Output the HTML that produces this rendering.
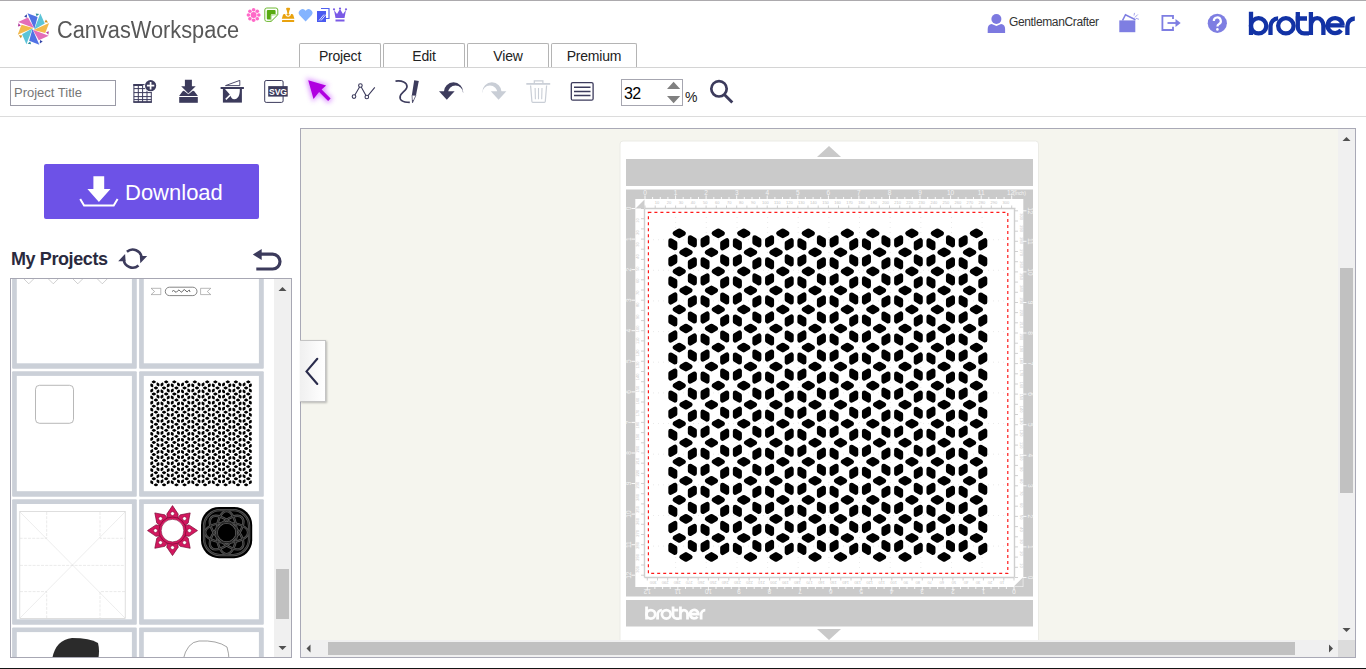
<!DOCTYPE html><html><head><meta charset="utf-8"><style>html,body{margin:0;padding:0}body{width:1366px;height:669px;position:relative;overflow:hidden;background:#fff;font-family:"Liberation Sans",sans-serif}</style></head><body><div style="position:absolute;left:0px;top:0px;width:1366px;height:1px;background:#acaaad"></div>
<svg style="position:absolute;left:0;top:0" width="60" height="50"><polygon points="34.38,28.72 27.49,13.17 37.59,17.02" fill="#5072e4"/><polygon points="34.23,29.46 40.34,13.60 44.76,23.46" fill="#5cc4d8"/><polygon points="33.58,29.88 49.13,22.99 45.28,33.09" fill="#f2b94c"/><polygon points="32.84,29.73 48.70,35.84 38.84,40.26" fill="#e36db9"/><polygon points="32.42,29.08 39.31,44.63 29.21,40.78" fill="#5072e4"/><polygon points="32.57,28.34 26.46,44.20 22.04,34.34" fill="#5cc4d8"/><polygon points="33.22,27.92 17.67,34.81 21.52,24.71" fill="#f2b94c"/><polygon points="33.96,28.07 18.10,21.96 27.96,17.54" fill="#e36db9"/><polygon points="26.99,14.24 24.10,16.38 26.78,17.71" fill="#3447a8"/><polygon points="39.24,14.00 35.68,13.47 36.63,16.31" fill="#2f8f9c"/><polygon points="48.06,22.49 45.92,19.60 44.59,22.28" fill="#d0901e"/><polygon points="48.30,34.74 48.83,31.18 45.99,32.13" fill="#b23a9c"/><polygon points="39.81,43.56 42.70,41.42 40.02,40.09" fill="#3447a8"/><polygon points="27.56,43.80 31.12,44.33 30.17,41.49" fill="#2f8f9c"/><polygon points="18.74,35.31 20.88,38.20 22.21,35.52" fill="#d0901e"/><polygon points="18.50,23.06 17.97,26.62 20.81,25.67" fill="#b23a9c"/></svg>
<div style="position:absolute;left:57px;top:15px;font-size:23.5px;color:#585858;line-height:30px;white-space:nowrap;transform:scaleX(0.926);transform-origin:0 0">CanvasWorkspace</div>
<svg style="position:absolute;left:244px;top:6px" width="106" height="18" viewBox="244 6 106 18">
<g fill="#ff69c8">
<circle cx="253.6" cy="15" r="3"/>
<circle cx="253.6" cy="9.8" r="1.8"/><circle cx="253.6" cy="20.2" r="1.8"/>
<circle cx="248.4" cy="15" r="1.8"/><circle cx="258.8" cy="15" r="1.8"/>
<circle cx="249.9" cy="11.3" r="1.8"/><circle cx="257.3" cy="11.3" r="1.8"/>
<circle cx="249.9" cy="18.7" r="1.8"/><circle cx="257.3" cy="18.7" r="1.8"/>
</g>
<path d="M264.8,10 a2,2 0 0 1 2,-2 h9 a2,2 0 0 1 2,2 v4.8 l-6.6,6.6 h-4.4 a2,2 0 0 1 -2,-2z" fill="#fff" stroke="#6cb830" stroke-width="1"/>
<path d="M266.8,11 a1,1 0 0 1 1,-1 h6.8 a1,1 0 0 1 1,1 v3.2 h-3.6 a1.2,1.2 0 0 0 -1.2,1.2 v4 h-3 a1,1 0 0 1 -1,-1z" fill="#58aa10"/>
<path d="M271,21.2 L277.6,14.6 L272,15.2 Q271.3,15.3 271.2,16z" fill="#fff" stroke="#7cc043" stroke-width="0.6"/>
<rect x="286.1" y="7.8" width="4" height="2.2" rx="1" fill="#e9a20e"/>
<path d="M286.6,9.8 L289.6,9.8 L288.7,13.8 L287.5,13.8 Z" fill="#e9a20e"/>
<path d="M281.8,18.8 L283,14.8 Q283.4,14 284.4,14 H285.2 Q285.6,16.8 288.1,16.8 Q290.6,16.8 291,14 H291.8 Q292.8,14 293.2,14.8 L294.4,18.8 Z" fill="#e9a20e"/>
<ellipse cx="288.1" cy="14.6" rx="1.6" ry="1.1" fill="#e9a20e"/>
<rect x="282" y="20.1" width="12.2" height="1.8" rx="0.5" fill="#e9a20e"/>
<path d="M305.6,21.5 l-6,-6.2 a3.6,3.6 0 0 1 6,-4.6 a3.6,3.6 0 0 1 6,4.6z" fill="#84b4ff"/>
<path d="M321,8.5 h8 v10 h-3" fill="none" stroke="#5060f0" stroke-width="1.2"/>
<rect x="317" y="11" width="9" height="11" fill="#4a5af0"/>
<path d="M319,20.5 l5,-6 M321,20.5 l5,-6" stroke="#fff" stroke-width="0.8"/>
<path d="M334,10 l3,4 l3,-5 l3,5 l3,-4 l-1.5,8 h-9z" fill="#7a5ae6"/>
<circle cx="334" cy="9.3" r="1.1" fill="#7a5ae6"/><circle cx="340" cy="8.5" r="1.1" fill="#7a5ae6"/><circle cx="346" cy="9.3" r="1.1" fill="#7a5ae6"/>
<rect x="335.5" y="19.5" width="9" height="2" fill="#7a5ae6"/>
</svg>
<div style="position:absolute;left:299px;top:43px;width:80px;height:24px;border:1px solid #b4b4b4;border-bottom:none;border-radius:2px 2px 0 0;background:#fff;box-sizing:content-box;font-size:14px;letter-spacing:-0.2px;color:#222;text-align:center;line-height:24px">Project</div>
<div style="position:absolute;left:383px;top:43px;width:80px;height:24px;border:1px solid #b4b4b4;border-bottom:none;border-radius:2px 2px 0 0;background:#fff;box-sizing:content-box;font-size:14px;letter-spacing:-0.2px;color:#222;text-align:center;line-height:24px">Edit</div>
<div style="position:absolute;left:467px;top:43px;width:80px;height:24px;border:1px solid #b4b4b4;border-bottom:none;border-radius:2px 2px 0 0;background:#fff;box-sizing:content-box;font-size:14px;letter-spacing:-0.2px;color:#222;text-align:center;line-height:24px">View</div>
<div style="position:absolute;left:551px;top:43px;width:84px;height:24px;border:1px solid #b4b4b4;border-bottom:none;border-radius:2px 2px 0 0;background:#fff;box-sizing:content-box;font-size:14px;letter-spacing:-0.2px;color:#222;text-align:center;line-height:24px">Premium</div>
<div style="position:absolute;left:0px;top:67px;width:1366px;height:1px;background:#d4d4d4"></div>
<svg style="position:absolute;left:985px;top:11px" width="24" height="24" viewBox="985 11 24 24">
<circle cx="996.4" cy="19" r="5" fill="#7c79e0"/>
<path d="M987.7,33 v-4 q0,-4.5 4,-5 l4.7,2 l4.7,-2 q4,0.5 4,5 v4z" fill="#7c79e0"/>
</svg>
<div style="position:absolute;left:1009px;top:14px;font-size:12px;letter-spacing:-0.36px;color:#333;line-height:16px;white-space:nowrap">GentlemanCrafter</div>
<svg style="position:absolute;left:1115px;top:10px" width="30" height="26" viewBox="1115 10 30 26">
<rect x="1119.3" y="20.4" width="16" height="11.8" fill="#7e7ee2"/>
<path d="M1122.5,20.5 l3,-5.8 l10,5" fill="none" stroke="#7e7ee2" stroke-width="1.6"/>
<path d="M1134.8,17.5 l3,-3 M1136,18.3 l3,1 M1134,15.5 l0.5,-2.6" stroke="#8e8ee8" stroke-width="0.8"/>
</svg>
<svg style="position:absolute;left:1158px;top:12px" width="26" height="22" viewBox="1158 12 26 22">
<path d="M1173,19 v-3.2 h-10.6 v14.2 h10.6 v-3.2" fill="none" stroke="#7e7ee2" stroke-width="1.8"/>
<path d="M1167.5,23 h8.5" stroke="#7e7ee2" stroke-width="1.8"/>
<path d="M1175.5,19 l5.2,4 l-5.2,4z" fill="#7e7ee2"/>
</svg>
<svg style="position:absolute;left:1205px;top:11px" width="25" height="25" viewBox="1205 11 25 25">
<circle cx="1217.3" cy="23.3" r="9.6" fill="#7e7ee2"/>
<path d="M1213.8,21 a3.5,3.5 0 1 1 5.2,3 q-1.6,0.8 -1.6,2.6" fill="none" stroke="#fff" stroke-width="2.2"/>
<circle cx="1217.4" cy="29.4" r="1.3" fill="#fff"/>
</svg>
<svg style="position:absolute;left:1245px;top:8px" width="115" height="32" viewBox="1245 8 115 32">
<g fill="none" stroke="#1232a5" stroke-width="4.3">
<path d="M1251,11.8 V34.9 M1270.5,34.9 V26.3 A7.6,7.9 0 0 1 1278.1,18.4 M1297.8,12.1 V27 A6.4,6.4 0 0 0 1304.2,33.4 H1309 M1295.5,18.5 H1307 M1310.9,12.1 V34.9 M1310.9,34.9 V25.9 A6.25,7.7 0 0 1 1323.4,25.9 V34.9 M1342.6,25.3 A7.5,7.5 0 1 0 1341.1,30.1 M1327.5,25.3 H1344.6 M1347.4,34.9 V26.3 A7.4,7.9 0 0 1 1354.8,18.5"/>
<ellipse cx="1258.6" cy="25.8" rx="7.7" ry="7.6"/>
<ellipse cx="1285.9" cy="25.8" rx="7.75" ry="7.6"/>
</g>
</svg>
<div style="position:absolute;left:10px;top:80px;width:104px;height:24px;border:1px solid #9a9aa6;font-size:13px;color:#767676;line-height:24px;padding-left:3px;box-sizing:content-box;white-space:nowrap;overflow:hidden;width:101px">Project Title</div>
<svg style="position:absolute;left:130px;top:77px" width="30" height="30" viewBox="130 77 30 30">
<g fill="none" stroke="#3c3b5c" stroke-width="1">
<rect x="133.9" y="84.6" width="17.4" height="17.6"/>
<path d="M133.9,88.6 h17.4 M133.9,92.6 h17.4 M133.9,96.6 h17.4 M133.9,99.6 h17.4 M138.3,84.6 v17.6 M142.6,84.6 v17.6 M147,84.6 v17.6"/>
</g>
<rect x="133.4" y="84" width="9" height="2" fill="#3c3b5c"/>
<rect x="133.4" y="101.2" width="18.4" height="1.5" fill="#3c3b5c"/>
<circle cx="150.6" cy="85.7" r="6.3" fill="#fff"/>
<circle cx="150.6" cy="85.7" r="5.6" fill="#3c3b5c"/>
<path d="M150.6,82 v7.4 M146.9,85.7 h7.4" stroke="#fff" stroke-width="1.7"/>
</svg>
<svg style="position:absolute;left:176px;top:77px" width="26" height="30" viewBox="176 77 26 30">
<path d="M184.9,79.8 H191.9 V86.2 H195.7 L188.4,93.5 L181.2,86.2 H184.9 Z" fill="#3c3b5c"/>
<path d="M179.1,95.9 L182.6,91.2 Q183.2,90.5 184,90.7 L188.4,94.3 L192.8,90.7 Q193.7,90.5 194.3,91.2 L197.9,95.9 Z" fill="#3c3b5c"/>
<rect x="179.2" y="97" width="18.6" height="5.8" fill="#3c3b5c"/>
</svg>
<svg style="position:absolute;left:218px;top:77px" width="30" height="30" viewBox="218 77 30 30">
<path d="M225.5,85.6 l14.3,-5.2 v5.2z" fill="none" stroke="#3c3b5c" stroke-width="0.9"/>
<rect x="220.6" y="87" width="23.3" height="2" fill="#3c3b5c"/>
<rect x="222.9" y="88.9" width="19" height="13.7" fill="#3c3b5c"/>
<path d="M225,89 H239.8 C240,95 238,99.3 234.4,99.3 C232,99.3 230.8,97 230.3,95 Z" fill="#fff"/>
<path d="M225.8,99.4 L231,94.4" stroke="#fff" stroke-width="1.5"/>
</svg>
<svg style="position:absolute;left:262px;top:77px" width="30" height="30" viewBox="262 77 30 30">
<rect x="264.7" y="80.5" width="18.4" height="21.9" rx="1.5" fill="#fff" stroke="#3c3b5c" stroke-width="1"/>
<rect x="268.2" y="86.1" width="19.5" height="10.5" fill="#3c3b5c"/>
<text x="277.9" y="94.6" font-family="Liberation Sans" font-weight="bold" font-size="8.6" fill="#fff" text-anchor="middle" letter-spacing="-0.2">SVG</text>
</svg>
<svg style="position:absolute;left:298px;top:70px" width="44" height="42" viewBox="298 70 44 42">
<defs><filter id="glow" x="-60%" y="-60%" width="220%" height="220%"><feGaussianBlur stdDeviation="2.6"/></filter></defs>
<path d="M308.2,80.3 L326.1,85.6 L321.6,89.6 L330.6,98.6 L328.1,101.1 L319.1,92.1 L313.5,98.9 Z" fill="#d070ff" stroke="#d070ff" stroke-width="3" opacity="0.75" filter="url(#glow)"/>
<path d="M308.2,80.3 L326.1,85.6 L321.6,89.6 L330.6,98.6 L328.1,101.1 L319.1,92.1 L313.5,98.9 Z" fill="#b000e0"/>
</svg>
<svg style="position:absolute;left:348px;top:80px" width="32" height="24" viewBox="348 80 32 24">
<path d="M354,96.6 l6.4,-11.1 l6.4,11.5 l8,-9.6" fill="none" stroke="#3c3b5c" stroke-width="1.1"/>
<circle cx="354" cy="96.6" r="1.8" fill="#fff" stroke="#3c3b5c" stroke-width="1.1"/>
<circle cx="360.4" cy="85.5" r="1.8" fill="#fff" stroke="#3c3b5c" stroke-width="1.1"/>
<circle cx="366.8" cy="97" r="1.8" fill="#fff" stroke="#3c3b5c" stroke-width="1.1"/>
</svg>
<svg style="position:absolute;left:392px;top:77px" width="30" height="30" viewBox="392 77 30 30">
<path d="M395.5,81.1 C402,80.3 407,82.3 407,86.5 C407,90.3 401.2,92.5 400.2,96.2 C399.4,99.8 402,102.3 409.8,102.4" fill="none" stroke="#3c3b5c" stroke-width="1.7"/>
<path d="M414.2,80.3 L418.8,81 L416,95.2 L411.9,95 Z" fill="#3c3b5c"/>
<path d="M412,95.2 L415.9,95.4 L412.5,102.8 Z" fill="#fff" stroke="#3c3b5c" stroke-width="0.7" stroke-linejoin="round"/>
<path d="M412.2,100 L413.6,100 L412.5,102.8z" fill="#3c3b5c"/>
</svg>
<svg style="position:absolute;left:436px;top:78px" width="30" height="26" viewBox="436 78 30 26">
<path d="M443.8,92 A9.7,9.7 0 0 1 463.2,92 L463.1,93 A7.6,7.6 0 0 0 447.9,93 Z" fill="#3c3b5c"/>
<path d="M439,91.3 L454.6,91.3 L446.8,99.8 Z" fill="#3c3b5c"/>
</svg>
<svg style="position:absolute;left:479px;top:78px" width="30" height="26" viewBox="479 78 30 26">
<path d="M501.6,92 A9.7,9.7 0 0 0 482.2,92 L482.3,93 A7.6,7.6 0 0 1 497.5,93 Z" fill="#c9ced6"/>
<path d="M506.4,91.3 L490.8,91.3 L498.6,99.8 Z" fill="#c9ced6"/>
</svg>
<svg style="position:absolute;left:524px;top:77px" width="30" height="28" viewBox="524 77 30 28">
<g fill="none" stroke="#c9ced6">
<path d="M526.3,83.9 h23.9" stroke-width="1.7"/>
<path d="M534.3,83.2 v-2.4 h8.6 v2.4" stroke-width="1.2"/>
<path d="M530.6,85.5 l1.3,16 q0.1,0.8 0.9,0.8 h11.6 q0.8,0 0.9,-0.8 l1.3,-16" stroke-width="1.2"/>
<path d="M535.1,88 l0.3,11.2 M538.5,88 v11.2 M542,88 l-0.3,11.2" stroke-width="1.1"/>
</g>
</svg>
<svg style="position:absolute;left:568px;top:79px" width="28" height="24" viewBox="568 79 28 24">
<rect x="571.3" y="82.6" width="21.8" height="17.6" rx="1.5" fill="#fff" stroke="#3c3b5c" stroke-width="1.3"/>
<path d="M574,87.2 h16.5 M574,91.4 h16.5 M574,95.6 h16.5" stroke="#3c3b5c" stroke-width="1.5"/>
</svg>
<div style="position:absolute;left:621px;top:79px;width:60px;height:25px;border:1px solid #a6a6b0;box-sizing:content-box"></div>
<div style="position:absolute;left:624px;top:83px;font-size:16px;letter-spacing:-0.7px;color:#000;line-height:22px">32</div>
<svg style="position:absolute;left:664px;top:80px" width="20" height="26" viewBox="664 80 20 26">
<path d="M667,89 l6.6,-7.2 l6.6,7.2z M667,96 h13.2 l-6.6,7.2z" fill="#808080"/>
</svg>
<div style="position:absolute;left:685px;top:88.5px;font-size:14px;color:#222;line-height:16px">%</div>
<svg style="position:absolute;left:706px;top:76px" width="30" height="30" viewBox="706 76 30 30">
<circle cx="719" cy="88.8" r="7.7" fill="none" stroke="#3c3b5c" stroke-width="2.7"/>
<path d="M724.3,94.4 l8,8.1" stroke="#3c3b5c" stroke-width="2.9" stroke-linecap="butt"/>
</svg>
<div style="position:absolute;left:0px;top:116px;width:1366px;height:1px;background:#dcdcdc"></div>
<div style="position:absolute;left:44px;top:164px;width:215px;height:55px;background:#6d52e7;border-radius:2px"></div>
<svg style="position:absolute;left:76px;top:172px" width="46" height="38" viewBox="76 172 46 38">
<path d="M93.4,176.2 h10.8 v12.8 h6.3 l-11.6,12.9 l-11.5,-12.9 h6z" fill="#fff"/>
<path d="M80.2,199.1 l3.9,6.4 h29.6 l3.9,-6.4" fill="none" stroke="#fff" stroke-width="2"/>
</svg>
<div style="position:absolute;left:125px;top:177.5px;font-size:22px;color:#fff;line-height:30px;white-space:nowrap">Download</div>
<div style="position:absolute;left:11px;top:246.5px;font-size:18px;font-weight:bold;letter-spacing:-0.4px;color:#2a2a3e;line-height:24px;white-space:nowrap">My Projects</div>
<svg style="position:absolute;left:114px;top:244px" width="36" height="30" viewBox="114 244 36 30">
<path d="M126.91,251.71 A9,9 0 0 1 141.65,257.66 M138.49,265.49 A9,9 0 0 1 123.75,259.54" fill="none" stroke="#3c3b5c" stroke-width="2.6"/>
<path d="M139.8,256 L147.2,256 L140.3,263.3 Z M125.6,261.2 L118.2,261.2 L125.1,253.9 Z" fill="#3c3b5c"/>
</svg>
<svg style="position:absolute;left:250px;top:246px" width="34" height="28" viewBox="250 246 34 28">
<path d="M260.5,254.2 H272.6 A7.4,7.4 0 0 1 272.6,269 H256.3" fill="none" stroke="#3c3b5c" stroke-width="3.2"/>
<path d="M252.8,254.4 L261.7,249 L261.7,260 Z" fill="#3c3b5c"/>
</svg>
<svg style="position:absolute;left:10px;top:278px" width="283" height="380" viewBox="10 278 283 380"><rect x="10.5" y="278.5" width="281" height="379" fill="#fff"/><rect x="12.1" y="243.3" width="124.7" height="125.5" rx="1" fill="#cbd0d8"/><rect x="16.8" y="248.0" width="115.1" height="115.3" fill="#fff"/><rect x="139.1" y="243.3" width="124.7" height="125.5" rx="1" fill="#cbd0d8"/><rect x="143.79999999999998" y="248.0" width="115.1" height="115.3" fill="#fff"/><rect x="12.1" y="371.2" width="124.7" height="125.5" rx="1" fill="#cbd0d8"/><rect x="16.8" y="375.9" width="115.1" height="115.3" fill="#fff"/><rect x="139.1" y="371.2" width="124.7" height="125.5" rx="1" fill="#cbd0d8"/><rect x="143.79999999999998" y="375.9" width="115.1" height="115.3" fill="#fff"/><rect x="12.1" y="499.3" width="124.7" height="125.5" rx="1" fill="#cbd0d8"/><rect x="16.8" y="504.0" width="115.1" height="115.3" fill="#fff"/><rect x="139.1" y="499.3" width="124.7" height="125.5" rx="1" fill="#cbd0d8"/><rect x="143.79999999999998" y="504.0" width="115.1" height="115.3" fill="#fff"/><rect x="12.1" y="627.4" width="124.7" height="125.5" rx="1" fill="#cbd0d8"/><rect x="16.8" y="632.1" width="115.1" height="115.3" fill="#fff"/><rect x="139.1" y="627.4" width="124.7" height="125.5" rx="1" fill="#cbd0d8"/><rect x="143.79999999999998" y="632.1" width="115.1" height="115.3" fill="#fff"/><path d="M24.0,279 l4.8,4.8 l4.8,-4.8" fill="none" stroke="#b0b0b0" stroke-width="0.6"/><path d="M48.5,279 l4.8,4.8 l4.8,-4.8" fill="none" stroke="#b0b0b0" stroke-width="0.6"/><path d="M73.0,279 l4.8,4.8 l4.8,-4.8" fill="none" stroke="#b0b0b0" stroke-width="0.6"/><path d="M97.5,279 l4.8,4.8 l4.8,-4.8" fill="none" stroke="#b0b0b0" stroke-width="0.6"/><path d="M151.1,288.3 H160.8 V294.6 H151.1 L154.6,291.5 Z" fill="none" stroke="#8a8a8a" stroke-width="0.6"/><rect x="165.3" y="287.2" width="31.7" height="8.4" rx="4.2" fill="none" stroke="#666" stroke-width="0.8"/><path d="M172,291.5 q1.5,-2 3,0 q1,2 2.5,-0.5 q1.5,-2.5 3,0.5 q1,2 2.5,-1 q1.5,-2 3,0.5 q1,2 2.5,-0.5 q1,-1.5 1.5,1.5" fill="none" stroke="#555" stroke-width="0.9"/><path d="M210.8,288.3 H200.6 V294.6 H210.8 L207.3,291.5 Z" fill="none" stroke="#8a8a8a" stroke-width="0.6"/><rect x="35.5" y="385.3" width="38" height="38" rx="4" fill="none" stroke="#999" stroke-width="0.7"/><use href="#pat" transform="translate(-62.2,307.7) scale(0.318)"/><rect x="19.8" y="511.5" width="105.4" height="107" fill="none" stroke="#d0d0d0" stroke-width="0.7"/><path d="M20,512 L125,618 M125,512 L20,618" stroke="#dadada" stroke-width="0.5"/><path d="M46.7,512 V538.3 H20 M100,512 V538.3 H125 M20,565.4 H125 M20,591.6 H46.7 V618 M125,591.6 H100 V618" fill="none" stroke="#d6d6d6" stroke-width="0.5" stroke-dasharray="3,1.2"/><g fill="#d3175f" stroke="#7a0a35" stroke-width="0.7" stroke-linejoin="round"><polygon points="172.50,505.60 178.20,514.05 177.58,519.18 167.42,519.18 166.80,514.05"/><polygon points="190.18,512.92 188.23,522.93 184.17,526.12 176.98,518.93 180.17,514.87"/><polygon points="197.50,530.60 189.05,536.30 183.92,535.68 183.92,525.52 189.05,524.90"/><polygon points="190.18,548.28 180.17,546.33 176.98,542.27 184.17,535.08 188.23,538.27"/><polygon points="172.50,555.60 166.80,547.15 167.42,542.02 177.58,542.02 178.20,547.15"/><polygon points="154.82,548.28 156.77,538.27 160.83,535.08 168.02,542.27 164.83,546.33"/><polygon points="147.50,530.60 155.95,524.90 161.08,525.52 161.08,535.68 155.95,536.30"/><polygon points="154.82,512.92 164.83,514.87 168.02,518.93 160.83,526.12 156.77,522.93"/><circle cx="172.5" cy="530.6" r="13.6"/></g><circle cx="172.5" cy="530.6" r="11.3" fill="#fff" stroke="#7a0a35" stroke-width="0.6"/><circle cx="172.50" cy="513.60" r="1.9" fill="#fff" stroke="#7a0a35" stroke-width="0.5"/><circle cx="184.52" cy="518.58" r="1.9" fill="#fff" stroke="#7a0a35" stroke-width="0.5"/><circle cx="189.50" cy="530.60" r="1.9" fill="#fff" stroke="#7a0a35" stroke-width="0.5"/><circle cx="184.52" cy="542.62" r="1.9" fill="#fff" stroke="#7a0a35" stroke-width="0.5"/><circle cx="172.50" cy="547.60" r="1.9" fill="#fff" stroke="#7a0a35" stroke-width="0.5"/><circle cx="160.48" cy="542.62" r="1.9" fill="#fff" stroke="#7a0a35" stroke-width="0.5"/><circle cx="155.50" cy="530.60" r="1.9" fill="#fff" stroke="#7a0a35" stroke-width="0.5"/><circle cx="160.48" cy="518.58" r="1.9" fill="#fff" stroke="#7a0a35" stroke-width="0.5"/><rect x="201.0" y="507.0" width="51.2" height="51.2" rx="18" fill="#000"/><g fill="none" stroke="#5a5a5a" stroke-width="2.4"><ellipse cx="226.6" cy="532.6" rx="21.5" ry="10" transform="rotate(0 226.6 532.6)"/><ellipse cx="226.6" cy="532.6" rx="21.5" ry="10" transform="rotate(45 226.6 532.6)"/><ellipse cx="226.6" cy="532.6" rx="21.5" ry="10" transform="rotate(90 226.6 532.6)"/><ellipse cx="226.6" cy="532.6" rx="21.5" ry="10" transform="rotate(135 226.6 532.6)"/><circle cx="226.6" cy="532.6" r="10"/><rect x="204.1" y="510.1" width="45" height="45" rx="16"/></g><g fill="none" stroke="#1a1a1a" stroke-width="0.7"><ellipse cx="226.6" cy="532.6" rx="21.5" ry="10" transform="rotate(0 226.6 532.6)"/><ellipse cx="226.6" cy="532.6" rx="21.5" ry="10" transform="rotate(45 226.6 532.6)"/><ellipse cx="226.6" cy="532.6" rx="21.5" ry="10" transform="rotate(90 226.6 532.6)"/><ellipse cx="226.6" cy="532.6" rx="21.5" ry="10" transform="rotate(135 226.6 532.6)"/><circle cx="226.6" cy="532.6" r="10"/><rect x="204.1" y="510.1" width="45" height="45" rx="16"/></g><circle cx="226.6" cy="532.6" r="8.4" fill="#000"/><path d="M52,660 q3,-20 20,-22 q18,0 26,5 q2,8 0,17z" fill="#2b2b2b"/><path d="M183,660 q4,-18 16,-19 q18,-1 28,6 q2,7 2,13" fill="none" stroke="#666" stroke-width="0.6"/><rect x="274" y="279" width="17" height="378" fill="#f0f0f0"/><rect x="10.5" y="278.5" width="281" height="379" fill="none" stroke="#a7a7b3" stroke-width="1"/><rect x="276" y="569" width="13" height="50" fill="#c1c1c1"/><path d="M278.5,291 l4,-4 l4,4z M278.5,646 h8 l-4,4z" fill="#505050"/></svg>
<div style="position:absolute;left:300px;top:128px;width:1056px;height:530px;border:1px solid #a9a9b6;background:#f5f5ee;box-sizing:border-box"></div>
<div style="position:absolute;left:1338px;top:129px;width:17px;height:511px;background:#f0f0f0"></div>
<div style="position:absolute;left:1340px;top:268px;width:13px;height:225px;background:#c1c1c1"></div>
<div style="position:absolute;left:301px;top:640px;width:1037px;height:17px;background:#f0f0f0"></div>
<div style="position:absolute;left:328px;top:642px;width:967px;height:13px;background:#c1c1c1"></div>
<div style="position:absolute;left:1338px;top:640px;width:17px;height:17px;background:#dcdcdc"></div>
<svg style="position:absolute;left:300px;top:128px" width="1056" height="530" viewBox="300 128 1056 530">
<path d="M1342.5,141 l4,-4 l4,4z M1342.5,628 h8 l-4,4z M306.5,648.5 l4,-4 v8z M1329,644.5 l4,4 l-4,4z" fill="#505050"/>
</svg>
<div style="position:absolute;left:300px;top:340px;width:25px;height:60px;border:1px solid #c4c4c4;border-left:none;background:linear-gradient(90deg,#f0f0f0,#fff);box-shadow:1px 1px 2px rgba(0,0,0,0.25)"></div>
<svg style="position:absolute;left:300px;top:350px" width="26" height="44" viewBox="300 350 26 44">
<path d="M317.3,358.8 l-10.8,12.6 l10.8,12.6" fill="none" stroke="#2a2c4c" stroke-width="2.1" stroke-linecap="round"/>
</svg>
<svg style="position:absolute;left:610px;top:135px" width="440" height="505" viewBox="610 135 440 505"><rect x="620" y="141" width="418.5" height="520" rx="3" fill="#fff" stroke="#ebebe6" stroke-width="1"/><path d="M817,157 l12,-11 l12,11z" fill="#c9c9c9"/><path d="M817,629 h24 l-12,11z" fill="#c9c9c9"/><rect x="626" y="159" width="407" height="27" fill="#cacaca"/><rect x="626" y="600" width="407" height="26.5" fill="#cacaca"/><rect x="626" y="189.5" width="407" height="407" fill="#cacaca"/><rect x="635.3" y="199" width="388" height="388" fill="#fff"/><path d="M635.5,208.5 l9,-9 v9z M1022.8,577.5 l-9,9 h9z" fill="#cdcdcd"/><path d="M644.5,208.5 h371 M644.5,208.5 v369 M1014.5,208.5 v369 M644.5,577.5 h370" fill="none" stroke="#cfcfcf" stroke-width="1.4"/><path d="M645.0,195.5 v3.5 M652.6,197 v2 M660.3,197 v2 M667.9,197 v2 M626,208.5 h0 M675.6,195.5 v3.5 M683.2,197 v2 M690.8,197 v2 M698.5,197 v2 M626,239.1 h0 M706.1,195.5 v3.5 M713.8,197 v2 M721.4,197 v2 M729.0,197 v2 M626,269.6 h0 M736.7,195.5 v3.5 M744.3,197 v2 M752.0,197 v2 M759.6,197 v2 M626,300.2 h0 M767.2,195.5 v3.5 M774.9,197 v2 M782.5,197 v2 M790.2,197 v2 M626,330.7 h0 M797.8,195.5 v3.5 M805.4,197 v2 M813.1,197 v2 M820.7,197 v2 M626,361.3 h0 M828.4,195.5 v3.5 M836.0,197 v2 M843.6,197 v2 M851.3,197 v2 M626,391.9 h0 M858.9,195.5 v3.5 M866.6,197 v2 M874.2,197 v2 M881.8,197 v2 M626,422.4 h0 M889.5,195.5 v3.5 M897.1,197 v2 M904.8,197 v2 M912.4,197 v2 M626,453.0 h0 M920.0,195.5 v3.5 M927.7,197 v2 M935.3,197 v2 M943.0,197 v2 M626,483.5 h0 M950.6,195.5 v3.5 M958.2,197 v2 M965.9,197 v2 M973.5,197 v2 M626,514.1 h0 M981.2,195.5 v3.5 M988.8,197 v2 M996.4,197 v2 M1004.1,197 v2 M626,544.7 h0 M1011.7,195.5 v3.5 M626,575.2 h0" stroke="#fff" stroke-width="0.9"/><path d="M1014.0,587 v3.5 M1006.4,587 v2 M998.7,587 v2 M991.1,587 v2 M983.4,587 v3.5 M975.8,587 v2 M968.2,587 v2 M960.5,587 v2 M952.9,587 v3.5 M945.2,587 v2 M937.6,587 v2 M930.0,587 v2 M922.3,587 v3.5 M914.7,587 v2 M907.0,587 v2 M899.4,587 v2 M891.8,587 v3.5 M884.1,587 v2 M876.5,587 v2 M868.8,587 v2 M861.2,587 v3.5 M853.6,587 v2 M845.9,587 v2 M838.3,587 v2 M830.6,587 v3.5 M823.0,587 v2 M815.4,587 v2 M807.7,587 v2 M800.1,587 v3.5 M792.4,587 v2 M784.8,587 v2 M777.2,587 v2 M769.5,587 v3.5 M761.9,587 v2 M754.2,587 v2 M746.6,587 v2 M739.0,587 v3.5 M731.3,587 v2 M723.7,587 v2 M716.0,587 v2 M708.4,587 v3.5 M700.8,587 v2 M693.1,587 v2 M685.5,587 v2 M677.8,587 v3.5 M670.2,587 v2 M662.6,587 v2 M654.9,587 v2 M647.3,587 v3.5" stroke="#fff" stroke-width="0.9"/><path d="M631.5,208.5 h3.5 M1023,577.5 h3.5 M631.5,239.1 h3.5 M1023,546.9 h3.5 M631.5,269.6 h3.5 M1023,516.4 h3.5 M631.5,300.2 h3.5 M1023,485.8 h3.5 M631.5,330.7 h3.5 M1023,455.3 h3.5 M631.5,361.3 h3.5 M1023,424.7 h3.5 M631.5,391.9 h3.5 M1023,394.1 h3.5 M631.5,422.4 h3.5 M1023,363.6 h3.5 M631.5,453.0 h3.5 M1023,333.0 h3.5 M631.5,483.5 h3.5 M1023,302.5 h3.5 M631.5,514.1 h3.5 M1023,271.9 h3.5 M631.5,544.7 h3.5 M1023,241.3 h3.5 M631.5,575.2 h3.5 M1023,210.8 h3.5" stroke="#fff" stroke-width="0.9"/><path d="M645.0,205.5 v2.5 M1014.0,578 v2.5 M641,208.5 h3 M1015,577.5 h3 M655.2,205.5 v2.5 M1003.8,578 v2.5 M641,218.7 h3 M1015,567.3 h3 M665.4,205.5 v2.5 M993.6,578 v2.5 M641,228.9 h3 M1015,557.1 h3 M675.6,205.5 v2.5 M983.4,578 v2.5 M641,239.1 h3 M1015,546.9 h3 M685.7,205.5 v2.5 M973.3,578 v2.5 M641,249.2 h3 M1015,536.8 h3 M695.9,205.5 v2.5 M963.1,578 v2.5 M641,259.4 h3 M1015,526.6 h3 M706.1,205.5 v2.5 M952.9,578 v2.5 M641,269.6 h3 M1015,516.4 h3 M716.3,205.5 v2.5 M942.7,578 v2.5 M641,279.8 h3 M1015,506.2 h3 M726.5,205.5 v2.5 M932.5,578 v2.5 M641,290.0 h3 M1015,496.0 h3 M736.7,205.5 v2.5 M922.3,578 v2.5 M641,300.2 h3 M1015,485.8 h3 M746.9,205.5 v2.5 M912.1,578 v2.5 M641,310.4 h3 M1015,475.6 h3 M757.1,205.5 v2.5 M901.9,578 v2.5 M641,320.6 h3 M1015,465.4 h3 M767.2,205.5 v2.5 M891.8,578 v2.5 M641,330.7 h3 M1015,455.3 h3 M777.4,205.5 v2.5 M881.6,578 v2.5 M641,340.9 h3 M1015,445.1 h3 M787.6,205.5 v2.5 M871.4,578 v2.5 M641,351.1 h3 M1015,434.9 h3 M797.8,205.5 v2.5 M861.2,578 v2.5 M641,361.3 h3 M1015,424.7 h3 M808.0,205.5 v2.5 M851.0,578 v2.5 M641,371.5 h3 M1015,414.5 h3 M818.2,205.5 v2.5 M840.8,578 v2.5 M641,381.7 h3 M1015,404.3 h3 M828.4,205.5 v2.5 M830.6,578 v2.5 M641,391.9 h3 M1015,394.1 h3 M838.5,205.5 v2.5 M820.5,578 v2.5 M641,402.0 h3 M1015,384.0 h3 M848.7,205.5 v2.5 M810.3,578 v2.5 M641,412.2 h3 M1015,373.8 h3 M858.9,205.5 v2.5 M800.1,578 v2.5 M641,422.4 h3 M1015,363.6 h3 M869.1,205.5 v2.5 M789.9,578 v2.5 M641,432.6 h3 M1015,353.4 h3 M879.3,205.5 v2.5 M779.7,578 v2.5 M641,442.8 h3 M1015,343.2 h3 M889.5,205.5 v2.5 M769.5,578 v2.5 M641,453.0 h3 M1015,333.0 h3 M899.7,205.5 v2.5 M759.3,578 v2.5 M641,463.2 h3 M1015,322.8 h3 M909.9,205.5 v2.5 M749.1,578 v2.5 M641,473.4 h3 M1015,312.6 h3 M920.0,205.5 v2.5 M739.0,578 v2.5 M641,483.5 h3 M1015,302.5 h3 M930.2,205.5 v2.5 M728.8,578 v2.5 M641,493.7 h3 M1015,292.3 h3 M940.4,205.5 v2.5 M718.6,578 v2.5 M641,503.9 h3 M1015,282.1 h3 M950.6,205.5 v2.5 M708.4,578 v2.5 M641,514.1 h3 M1015,271.9 h3 M960.8,205.5 v2.5 M698.2,578 v2.5 M641,524.3 h3 M1015,261.7 h3 M971.0,205.5 v2.5 M688.0,578 v2.5 M641,534.5 h3 M1015,251.5 h3 M981.2,205.5 v2.5 M677.8,578 v2.5 M641,544.7 h3 M1015,241.3 h3 M991.3,205.5 v2.5 M667.7,578 v2.5 M641,554.8 h3 M1015,231.2 h3 M1001.5,205.5 v2.5 M657.5,578 v2.5 M641,565.0 h3 M1015,221.0 h3 M1011.7,205.5 v2.5 M647.3,578 v2.5 M641,575.2 h3 M1015,210.8 h3" stroke="#bdbdbd" stroke-width="0.7"/><g font-family="Liberation Sans" font-size="6.5" fill="#f4f4f4"><text x="645.0" y="195" text-anchor="middle">0</text><text x="675.6" y="195" text-anchor="middle">1</text><text x="706.1" y="195" text-anchor="middle">2</text><text x="736.7" y="195" text-anchor="middle">3</text><text x="767.2" y="195" text-anchor="middle">4</text><text x="797.8" y="195" text-anchor="middle">5</text><text x="828.4" y="195" text-anchor="middle">6</text><text x="858.9" y="195" text-anchor="middle">7</text><text x="889.5" y="195" text-anchor="middle">8</text><text x="920.0" y="195" text-anchor="middle">9</text><text x="950.6" y="195" text-anchor="middle">10</text><text x="981.2" y="195" text-anchor="middle">11</text><text x="1011.7" y="195" text-anchor="middle">12"</text><text x="1013" y="195" font-size="5.2">(inch)</text></g><g font-family="Liberation Sans" font-size="6.5" fill="#f4f4f4"><text x="1014.0" y="593" text-anchor="middle" transform="rotate(180 1014.0 591)">0</text><text x="983.4" y="593" text-anchor="middle" transform="rotate(180 983.4 591)">1</text><text x="952.9" y="593" text-anchor="middle" transform="rotate(180 952.9 591)">2</text><text x="922.3" y="593" text-anchor="middle" transform="rotate(180 922.3 591)">3</text><text x="891.8" y="593" text-anchor="middle" transform="rotate(180 891.8 591)">4</text><text x="861.2" y="593" text-anchor="middle" transform="rotate(180 861.2 591)">5</text><text x="830.6" y="593" text-anchor="middle" transform="rotate(180 830.6 591)">6</text><text x="800.1" y="593" text-anchor="middle" transform="rotate(180 800.1 591)">7</text><text x="769.5" y="593" text-anchor="middle" transform="rotate(180 769.5 591)">8</text><text x="739.0" y="593" text-anchor="middle" transform="rotate(180 739.0 591)">9</text><text x="708.4" y="593" text-anchor="middle" transform="rotate(180 708.4 591)">10</text><text x="677.8" y="593" text-anchor="middle" transform="rotate(180 677.8 591)">11</text><text x="647.3" y="593" text-anchor="middle" transform="rotate(180 647.3 591)">12</text></g><g font-family="Liberation Sans" font-size="4" fill="#c4c4c4"><text x="657.0" y="204" text-anchor="middle">10</text><text x="669.1" y="204" text-anchor="middle">20</text><text x="681.1" y="204" text-anchor="middle">30</text><text x="693.1" y="204" text-anchor="middle">40</text><text x="705.2" y="204" text-anchor="middle">50</text><text x="717.2" y="204" text-anchor="middle">60</text><text x="729.2" y="204" text-anchor="middle">70</text><text x="741.3" y="204" text-anchor="middle">80</text><text x="753.3" y="204" text-anchor="middle">90</text><text x="765.3" y="204" text-anchor="middle">100</text><text x="777.3" y="204" text-anchor="middle">110</text><text x="789.4" y="204" text-anchor="middle">120</text><text x="801.4" y="204" text-anchor="middle">130</text><text x="813.4" y="204" text-anchor="middle">140</text><text x="825.5" y="204" text-anchor="middle">150</text><text x="837.5" y="204" text-anchor="middle">160</text><text x="849.5" y="204" text-anchor="middle">170</text><text x="861.6" y="204" text-anchor="middle">180</text><text x="873.6" y="204" text-anchor="middle">190</text><text x="885.6" y="204" text-anchor="middle">200</text><text x="897.7" y="204" text-anchor="middle">210</text><text x="909.7" y="204" text-anchor="middle">220</text><text x="921.7" y="204" text-anchor="middle">230</text><text x="933.8" y="204" text-anchor="middle">240</text><text x="945.8" y="204" text-anchor="middle">250</text><text x="957.8" y="204" text-anchor="middle">260</text><text x="969.9" y="204" text-anchor="middle">270</text><text x="981.9" y="204" text-anchor="middle">280</text><text x="993.9" y="204" text-anchor="middle">290</text><text x="1005.9" y="204" text-anchor="middle">300</text></g><g font-family="Liberation Sans" font-size="4" fill="#c4c4c4"><text x="1002.0" y="583" text-anchor="middle" transform="rotate(180 1002.0 582)">10</text><text x="989.9" y="583" text-anchor="middle" transform="rotate(180 989.9 582)">20</text><text x="977.9" y="583" text-anchor="middle" transform="rotate(180 977.9 582)">30</text><text x="965.9" y="583" text-anchor="middle" transform="rotate(180 965.9 582)">40</text><text x="953.8" y="583" text-anchor="middle" transform="rotate(180 953.8 582)">50</text><text x="941.8" y="583" text-anchor="middle" transform="rotate(180 941.8 582)">60</text><text x="929.8" y="583" text-anchor="middle" transform="rotate(180 929.8 582)">70</text><text x="917.7" y="583" text-anchor="middle" transform="rotate(180 917.7 582)">80</text><text x="905.7" y="583" text-anchor="middle" transform="rotate(180 905.7 582)">90</text><text x="893.7" y="583" text-anchor="middle" transform="rotate(180 893.7 582)">100</text><text x="881.7" y="583" text-anchor="middle" transform="rotate(180 881.7 582)">110</text><text x="869.6" y="583" text-anchor="middle" transform="rotate(180 869.6 582)">120</text><text x="857.6" y="583" text-anchor="middle" transform="rotate(180 857.6 582)">130</text><text x="845.6" y="583" text-anchor="middle" transform="rotate(180 845.6 582)">140</text><text x="833.5" y="583" text-anchor="middle" transform="rotate(180 833.5 582)">150</text><text x="821.5" y="583" text-anchor="middle" transform="rotate(180 821.5 582)">160</text><text x="809.5" y="583" text-anchor="middle" transform="rotate(180 809.5 582)">170</text><text x="797.4" y="583" text-anchor="middle" transform="rotate(180 797.4 582)">180</text><text x="785.4" y="583" text-anchor="middle" transform="rotate(180 785.4 582)">190</text><text x="773.4" y="583" text-anchor="middle" transform="rotate(180 773.4 582)">200</text><text x="761.3" y="583" text-anchor="middle" transform="rotate(180 761.3 582)">210</text><text x="749.3" y="583" text-anchor="middle" transform="rotate(180 749.3 582)">220</text><text x="737.3" y="583" text-anchor="middle" transform="rotate(180 737.3 582)">230</text><text x="725.2" y="583" text-anchor="middle" transform="rotate(180 725.2 582)">240</text><text x="713.2" y="583" text-anchor="middle" transform="rotate(180 713.2 582)">250</text><text x="701.2" y="583" text-anchor="middle" transform="rotate(180 701.2 582)">260</text><text x="689.1" y="583" text-anchor="middle" transform="rotate(180 689.1 582)">270</text><text x="677.1" y="583" text-anchor="middle" transform="rotate(180 677.1 582)">280</text><text x="665.1" y="583" text-anchor="middle" transform="rotate(180 665.1 582)">290</text><text x="653.1" y="583" text-anchor="middle" transform="rotate(180 653.1 582)">300</text></g><g font-family="Liberation Sans" font-size="6.5" fill="#f4f4f4"><text x="631.5" y="208.5" text-anchor="middle" transform="rotate(-90 631.5 208.5) translate(0 -0.5)">0</text><text x="1027.5" y="577.5" text-anchor="middle" transform="rotate(90 1027.5 577.5) translate(0 -0.5)">0</text><text x="631.5" y="239.1" text-anchor="middle" transform="rotate(-90 631.5 239.1) translate(0 -0.5)">1</text><text x="1027.5" y="546.9" text-anchor="middle" transform="rotate(90 1027.5 546.9) translate(0 -0.5)">1</text><text x="631.5" y="269.6" text-anchor="middle" transform="rotate(-90 631.5 269.6) translate(0 -0.5)">2</text><text x="1027.5" y="516.4" text-anchor="middle" transform="rotate(90 1027.5 516.4) translate(0 -0.5)">2</text><text x="631.5" y="300.2" text-anchor="middle" transform="rotate(-90 631.5 300.2) translate(0 -0.5)">3</text><text x="1027.5" y="485.8" text-anchor="middle" transform="rotate(90 1027.5 485.8) translate(0 -0.5)">3</text><text x="631.5" y="330.7" text-anchor="middle" transform="rotate(-90 631.5 330.7) translate(0 -0.5)">4</text><text x="1027.5" y="455.3" text-anchor="middle" transform="rotate(90 1027.5 455.3) translate(0 -0.5)">4</text><text x="631.5" y="361.3" text-anchor="middle" transform="rotate(-90 631.5 361.3) translate(0 -0.5)">5</text><text x="1027.5" y="424.7" text-anchor="middle" transform="rotate(90 1027.5 424.7) translate(0 -0.5)">5</text><text x="631.5" y="391.9" text-anchor="middle" transform="rotate(-90 631.5 391.9) translate(0 -0.5)">6</text><text x="1027.5" y="394.1" text-anchor="middle" transform="rotate(90 1027.5 394.1) translate(0 -0.5)">6</text><text x="631.5" y="422.4" text-anchor="middle" transform="rotate(-90 631.5 422.4) translate(0 -0.5)">7</text><text x="1027.5" y="363.6" text-anchor="middle" transform="rotate(90 1027.5 363.6) translate(0 -0.5)">7</text><text x="631.5" y="453.0" text-anchor="middle" transform="rotate(-90 631.5 453.0) translate(0 -0.5)">8</text><text x="1027.5" y="333.0" text-anchor="middle" transform="rotate(90 1027.5 333.0) translate(0 -0.5)">8</text><text x="631.5" y="483.5" text-anchor="middle" transform="rotate(-90 631.5 483.5) translate(0 -0.5)">9</text><text x="1027.5" y="302.5" text-anchor="middle" transform="rotate(90 1027.5 302.5) translate(0 -0.5)">9</text><text x="631.5" y="514.1" text-anchor="middle" transform="rotate(-90 631.5 514.1) translate(0 -0.5)">10</text><text x="1027.5" y="271.9" text-anchor="middle" transform="rotate(90 1027.5 271.9) translate(0 -0.5)">10</text><text x="631.5" y="544.7" text-anchor="middle" transform="rotate(-90 631.5 544.7) translate(0 -0.5)">11</text><text x="1027.5" y="241.3" text-anchor="middle" transform="rotate(90 1027.5 241.3) translate(0 -0.5)">11</text><text x="631.5" y="575.2" text-anchor="middle" transform="rotate(-90 631.5 575.2) translate(0 -0.5)">12</text><text x="1027.5" y="210.8" text-anchor="middle" transform="rotate(90 1027.5 210.8) translate(0 -0.5)">12</text></g><g font-family="Liberation Sans" font-size="4" fill="#c4c4c4"><text x="639" y="220.5" text-anchor="middle" transform="rotate(-90 639 220.5)">10</text><text x="1019.5" y="565.5" text-anchor="middle" transform="rotate(90 1019.5 565.5)">10</text><text x="639" y="232.6" text-anchor="middle" transform="rotate(-90 639 232.6)">20</text><text x="1019.5" y="553.4" text-anchor="middle" transform="rotate(90 1019.5 553.4)">20</text><text x="639" y="244.6" text-anchor="middle" transform="rotate(-90 639 244.6)">30</text><text x="1019.5" y="541.4" text-anchor="middle" transform="rotate(90 1019.5 541.4)">30</text><text x="639" y="256.6" text-anchor="middle" transform="rotate(-90 639 256.6)">40</text><text x="1019.5" y="529.4" text-anchor="middle" transform="rotate(90 1019.5 529.4)">40</text><text x="639" y="268.7" text-anchor="middle" transform="rotate(-90 639 268.7)">50</text><text x="1019.5" y="517.3" text-anchor="middle" transform="rotate(90 1019.5 517.3)">50</text><text x="639" y="280.7" text-anchor="middle" transform="rotate(-90 639 280.7)">60</text><text x="1019.5" y="505.3" text-anchor="middle" transform="rotate(90 1019.5 505.3)">60</text><text x="639" y="292.7" text-anchor="middle" transform="rotate(-90 639 292.7)">70</text><text x="1019.5" y="493.3" text-anchor="middle" transform="rotate(90 1019.5 493.3)">70</text><text x="639" y="304.8" text-anchor="middle" transform="rotate(-90 639 304.8)">80</text><text x="1019.5" y="481.2" text-anchor="middle" transform="rotate(90 1019.5 481.2)">80</text><text x="639" y="316.8" text-anchor="middle" transform="rotate(-90 639 316.8)">90</text><text x="1019.5" y="469.2" text-anchor="middle" transform="rotate(90 1019.5 469.2)">90</text><text x="639" y="328.8" text-anchor="middle" transform="rotate(-90 639 328.8)">100</text><text x="1019.5" y="457.2" text-anchor="middle" transform="rotate(90 1019.5 457.2)">100</text><text x="639" y="340.8" text-anchor="middle" transform="rotate(-90 639 340.8)">110</text><text x="1019.5" y="445.2" text-anchor="middle" transform="rotate(90 1019.5 445.2)">110</text><text x="639" y="352.9" text-anchor="middle" transform="rotate(-90 639 352.9)">120</text><text x="1019.5" y="433.1" text-anchor="middle" transform="rotate(90 1019.5 433.1)">120</text><text x="639" y="364.9" text-anchor="middle" transform="rotate(-90 639 364.9)">130</text><text x="1019.5" y="421.1" text-anchor="middle" transform="rotate(90 1019.5 421.1)">130</text><text x="639" y="376.9" text-anchor="middle" transform="rotate(-90 639 376.9)">140</text><text x="1019.5" y="409.1" text-anchor="middle" transform="rotate(90 1019.5 409.1)">140</text><text x="639" y="389.0" text-anchor="middle" transform="rotate(-90 639 389.0)">150</text><text x="1019.5" y="397.0" text-anchor="middle" transform="rotate(90 1019.5 397.0)">150</text><text x="639" y="401.0" text-anchor="middle" transform="rotate(-90 639 401.0)">160</text><text x="1019.5" y="385.0" text-anchor="middle" transform="rotate(90 1019.5 385.0)">160</text><text x="639" y="413.0" text-anchor="middle" transform="rotate(-90 639 413.0)">170</text><text x="1019.5" y="373.0" text-anchor="middle" transform="rotate(90 1019.5 373.0)">170</text><text x="639" y="425.1" text-anchor="middle" transform="rotate(-90 639 425.1)">180</text><text x="1019.5" y="360.9" text-anchor="middle" transform="rotate(90 1019.5 360.9)">180</text><text x="639" y="437.1" text-anchor="middle" transform="rotate(-90 639 437.1)">190</text><text x="1019.5" y="348.9" text-anchor="middle" transform="rotate(90 1019.5 348.9)">190</text><text x="639" y="449.1" text-anchor="middle" transform="rotate(-90 639 449.1)">200</text><text x="1019.5" y="336.9" text-anchor="middle" transform="rotate(90 1019.5 336.9)">200</text><text x="639" y="461.2" text-anchor="middle" transform="rotate(-90 639 461.2)">210</text><text x="1019.5" y="324.8" text-anchor="middle" transform="rotate(90 1019.5 324.8)">210</text><text x="639" y="473.2" text-anchor="middle" transform="rotate(-90 639 473.2)">220</text><text x="1019.5" y="312.8" text-anchor="middle" transform="rotate(90 1019.5 312.8)">220</text><text x="639" y="485.2" text-anchor="middle" transform="rotate(-90 639 485.2)">230</text><text x="1019.5" y="300.8" text-anchor="middle" transform="rotate(90 1019.5 300.8)">230</text><text x="639" y="497.3" text-anchor="middle" transform="rotate(-90 639 497.3)">240</text><text x="1019.5" y="288.7" text-anchor="middle" transform="rotate(90 1019.5 288.7)">240</text><text x="639" y="509.3" text-anchor="middle" transform="rotate(-90 639 509.3)">250</text><text x="1019.5" y="276.7" text-anchor="middle" transform="rotate(90 1019.5 276.7)">250</text><text x="639" y="521.3" text-anchor="middle" transform="rotate(-90 639 521.3)">260</text><text x="1019.5" y="264.7" text-anchor="middle" transform="rotate(90 1019.5 264.7)">260</text><text x="639" y="533.4" text-anchor="middle" transform="rotate(-90 639 533.4)">270</text><text x="1019.5" y="252.6" text-anchor="middle" transform="rotate(90 1019.5 252.6)">270</text><text x="639" y="545.4" text-anchor="middle" transform="rotate(-90 639 545.4)">280</text><text x="1019.5" y="240.6" text-anchor="middle" transform="rotate(90 1019.5 240.6)">280</text><text x="639" y="557.4" text-anchor="middle" transform="rotate(-90 639 557.4)">290</text><text x="1019.5" y="228.6" text-anchor="middle" transform="rotate(90 1019.5 228.6)">290</text><text x="639" y="569.4" text-anchor="middle" transform="rotate(-90 639 569.4)">300</text><text x="1019.5" y="216.6" text-anchor="middle" transform="rotate(90 1019.5 216.6)">300</text></g><path d="M675.6,212 v362 M648,239.7 h360 M706.3,212 v362 M648,270.3 h360 M737.0,212 v362 M648,300.9 h360 M767.6,212 v362 M648,331.6 h360 M798.2,212 v362 M648,362.2 h360 M828.9,212 v362 M648,392.9 h360 M859.5,212 v362 M648,423.5 h360 M890.2,212 v362 M648,454.2 h360 M920.8,212 v362 M648,484.8 h360 M951.5,212 v362 M648,515.5 h360 M982.1,212 v362 M648,546.1 h360" stroke="#e4e4e4" stroke-width="0.8" stroke-dasharray="1,4"/><rect x="648.4" y="212.4" width="359.4" height="361" fill="none" stroke="#ff1a1a" stroke-width="1.2" stroke-dasharray="3,3"/><g fill="none" stroke="#fdfdfd" stroke-width="4.9" transform="translate(645.3 606.3) scale(0.566 0.563) translate(-1248.8 -11.6)"><path d="M1251,11.8 V34.9 M1270.5,34.9 V26.3 A7.6,7.9 0 0 1 1278.1,18.4 M1297.8,12.1 V27 A6.4,6.4 0 0 0 1304.2,33.4 H1309 M1295.5,18.5 H1307 M1310.9,12.1 V34.9 M1310.9,34.9 V25.9 A6.25,7.7 0 0 1 1323.4,25.9 V34.9 M1342.6,25.3 A7.5,7.5 0 1 0 1341.1,30.1 M1327.5,25.3 H1344.6 M1347.4,34.9 V26.3 A7.4,7.9 0 0 1 1354.8,18.5"/><ellipse cx="1258.6" cy="25.8" rx="7.7" ry="7.6"/><ellipse cx="1285.9" cy="25.8" rx="7.75" ry="7.6"/></g></svg>
<svg style="position:absolute;left:650px;top:215px" width="360" height="360" viewBox="650 215 360 360"><defs><path id="h" d="M-4.24,0 L0,-2.45 L4.24,0 L0,2.45Z"/><path id="v1" d="M-2.120,-3.672 L2.122,-1.225 L2.120,3.672 L-2.122,1.225Z"/><path id="v2" d="M-2.120,3.672 L-2.122,-1.225 L2.120,-3.672 L2.122,1.225Z"/></defs><g id="pat" fill="#000" stroke="#000" stroke-width="4.8" stroke-linejoin="round"><use href="#h" x="679.25" y="233.30"/><use href="#v1" x="672.85" y="244.30"/><use href="#h" x="718.28" y="233.30"/><use href="#h" x="743.78" y="233.30"/><use href="#v2" x="724.68" y="244.30"/><use href="#v1" x="737.38" y="244.30"/><use href="#h" x="782.81" y="233.30"/><use href="#h" x="808.31" y="233.30"/><use href="#v2" x="789.21" y="244.30"/><use href="#v1" x="801.91" y="244.30"/><use href="#h" x="847.34" y="233.30"/><use href="#h" x="872.84" y="233.30"/><use href="#v2" x="853.74" y="244.30"/><use href="#v1" x="866.44" y="244.30"/><use href="#h" x="911.87" y="233.30"/><use href="#h" x="937.37" y="233.30"/><use href="#v2" x="918.27" y="244.30"/><use href="#v1" x="930.97" y="244.30"/><use href="#h" x="976.40" y="233.30"/><use href="#v2" x="982.80" y="244.30"/><use href="#h" x="685.95" y="252.34"/><use href="#h" x="711.45" y="252.34"/><use href="#v1" x="692.35" y="241.34"/><use href="#v2" x="705.05" y="241.34"/><use href="#v2" x="692.35" y="263.34"/><use href="#v1" x="705.05" y="263.34"/><use href="#h" x="750.48" y="252.34"/><use href="#h" x="775.98" y="252.34"/><use href="#v1" x="756.88" y="241.34"/><use href="#v2" x="769.58" y="241.34"/><use href="#v2" x="756.88" y="263.34"/><use href="#v1" x="769.58" y="263.34"/><use href="#h" x="815.01" y="252.34"/><use href="#h" x="840.51" y="252.34"/><use href="#v1" x="821.41" y="241.34"/><use href="#v2" x="834.11" y="241.34"/><use href="#v2" x="821.41" y="263.34"/><use href="#v1" x="834.11" y="263.34"/><use href="#h" x="879.54" y="252.34"/><use href="#h" x="905.04" y="252.34"/><use href="#v1" x="885.94" y="241.34"/><use href="#v2" x="898.64" y="241.34"/><use href="#v2" x="885.94" y="263.34"/><use href="#v1" x="898.64" y="263.34"/><use href="#h" x="944.07" y="252.34"/><use href="#h" x="969.57" y="252.34"/><use href="#v1" x="950.47" y="241.34"/><use href="#v2" x="963.17" y="241.34"/><use href="#v2" x="950.47" y="263.34"/><use href="#v1" x="963.17" y="263.34"/><use href="#h" x="679.25" y="271.38"/><use href="#v2" x="672.85" y="260.38"/><use href="#v1" x="672.85" y="282.38"/><use href="#h" x="718.28" y="271.38"/><use href="#h" x="743.78" y="271.38"/><use href="#v1" x="724.68" y="260.38"/><use href="#v2" x="737.38" y="260.38"/><use href="#v2" x="724.68" y="282.38"/><use href="#v1" x="737.38" y="282.38"/><use href="#h" x="782.81" y="271.38"/><use href="#h" x="808.31" y="271.38"/><use href="#v1" x="789.21" y="260.38"/><use href="#v2" x="801.91" y="260.38"/><use href="#v2" x="789.21" y="282.38"/><use href="#v1" x="801.91" y="282.38"/><use href="#h" x="847.34" y="271.38"/><use href="#h" x="872.84" y="271.38"/><use href="#v1" x="853.74" y="260.38"/><use href="#v2" x="866.44" y="260.38"/><use href="#v2" x="853.74" y="282.38"/><use href="#v1" x="866.44" y="282.38"/><use href="#h" x="911.87" y="271.38"/><use href="#h" x="937.37" y="271.38"/><use href="#v1" x="918.27" y="260.38"/><use href="#v2" x="930.97" y="260.38"/><use href="#v2" x="918.27" y="282.38"/><use href="#v1" x="930.97" y="282.38"/><use href="#h" x="976.40" y="271.38"/><use href="#v1" x="982.80" y="260.38"/><use href="#v2" x="982.80" y="282.38"/><use href="#h" x="685.95" y="290.42"/><use href="#h" x="711.45" y="290.42"/><use href="#v1" x="692.35" y="279.42"/><use href="#v2" x="705.05" y="279.42"/><use href="#v2" x="692.35" y="301.42"/><use href="#v1" x="705.05" y="301.42"/><use href="#h" x="750.48" y="290.42"/><use href="#h" x="775.98" y="290.42"/><use href="#v1" x="756.88" y="279.42"/><use href="#v2" x="769.58" y="279.42"/><use href="#v2" x="756.88" y="301.42"/><use href="#v1" x="769.58" y="301.42"/><use href="#h" x="815.01" y="290.42"/><use href="#h" x="840.51" y="290.42"/><use href="#v1" x="821.41" y="279.42"/><use href="#v2" x="834.11" y="279.42"/><use href="#v2" x="821.41" y="301.42"/><use href="#v1" x="834.11" y="301.42"/><use href="#h" x="879.54" y="290.42"/><use href="#h" x="905.04" y="290.42"/><use href="#v1" x="885.94" y="279.42"/><use href="#v2" x="898.64" y="279.42"/><use href="#v2" x="885.94" y="301.42"/><use href="#v1" x="898.64" y="301.42"/><use href="#h" x="944.07" y="290.42"/><use href="#h" x="969.57" y="290.42"/><use href="#v1" x="950.47" y="279.42"/><use href="#v2" x="963.17" y="279.42"/><use href="#v2" x="950.47" y="301.42"/><use href="#v1" x="963.17" y="301.42"/><use href="#h" x="679.25" y="309.46"/><use href="#v2" x="672.85" y="298.46"/><use href="#v1" x="672.85" y="320.46"/><use href="#h" x="718.28" y="309.46"/><use href="#h" x="743.78" y="309.46"/><use href="#v1" x="724.68" y="298.46"/><use href="#v2" x="737.38" y="298.46"/><use href="#v2" x="724.68" y="320.46"/><use href="#v1" x="737.38" y="320.46"/><use href="#h" x="782.81" y="309.46"/><use href="#h" x="808.31" y="309.46"/><use href="#v1" x="789.21" y="298.46"/><use href="#v2" x="801.91" y="298.46"/><use href="#v2" x="789.21" y="320.46"/><use href="#v1" x="801.91" y="320.46"/><use href="#h" x="847.34" y="309.46"/><use href="#h" x="872.84" y="309.46"/><use href="#v1" x="853.74" y="298.46"/><use href="#v2" x="866.44" y="298.46"/><use href="#v2" x="853.74" y="320.46"/><use href="#v1" x="866.44" y="320.46"/><use href="#h" x="911.87" y="309.46"/><use href="#h" x="937.37" y="309.46"/><use href="#v1" x="918.27" y="298.46"/><use href="#v2" x="930.97" y="298.46"/><use href="#v2" x="918.27" y="320.46"/><use href="#v1" x="930.97" y="320.46"/><use href="#h" x="976.40" y="309.46"/><use href="#v1" x="982.80" y="298.46"/><use href="#v2" x="982.80" y="320.46"/><use href="#h" x="685.95" y="328.50"/><use href="#h" x="711.45" y="328.50"/><use href="#v1" x="692.35" y="317.50"/><use href="#v2" x="705.05" y="317.50"/><use href="#v2" x="692.35" y="339.50"/><use href="#v1" x="705.05" y="339.50"/><use href="#h" x="750.48" y="328.50"/><use href="#h" x="775.98" y="328.50"/><use href="#v1" x="756.88" y="317.50"/><use href="#v2" x="769.58" y="317.50"/><use href="#v2" x="756.88" y="339.50"/><use href="#v1" x="769.58" y="339.50"/><use href="#h" x="815.01" y="328.50"/><use href="#h" x="840.51" y="328.50"/><use href="#v1" x="821.41" y="317.50"/><use href="#v2" x="834.11" y="317.50"/><use href="#v2" x="821.41" y="339.50"/><use href="#v1" x="834.11" y="339.50"/><use href="#h" x="879.54" y="328.50"/><use href="#h" x="905.04" y="328.50"/><use href="#v1" x="885.94" y="317.50"/><use href="#v2" x="898.64" y="317.50"/><use href="#v2" x="885.94" y="339.50"/><use href="#v1" x="898.64" y="339.50"/><use href="#h" x="944.07" y="328.50"/><use href="#h" x="969.57" y="328.50"/><use href="#v1" x="950.47" y="317.50"/><use href="#v2" x="963.17" y="317.50"/><use href="#v2" x="950.47" y="339.50"/><use href="#v1" x="963.17" y="339.50"/><use href="#h" x="679.25" y="347.54"/><use href="#v2" x="672.85" y="336.54"/><use href="#v1" x="672.85" y="358.54"/><use href="#h" x="718.28" y="347.54"/><use href="#h" x="743.78" y="347.54"/><use href="#v1" x="724.68" y="336.54"/><use href="#v2" x="737.38" y="336.54"/><use href="#v2" x="724.68" y="358.54"/><use href="#v1" x="737.38" y="358.54"/><use href="#h" x="782.81" y="347.54"/><use href="#h" x="808.31" y="347.54"/><use href="#v1" x="789.21" y="336.54"/><use href="#v2" x="801.91" y="336.54"/><use href="#v2" x="789.21" y="358.54"/><use href="#v1" x="801.91" y="358.54"/><use href="#h" x="847.34" y="347.54"/><use href="#h" x="872.84" y="347.54"/><use href="#v1" x="853.74" y="336.54"/><use href="#v2" x="866.44" y="336.54"/><use href="#v2" x="853.74" y="358.54"/><use href="#v1" x="866.44" y="358.54"/><use href="#h" x="911.87" y="347.54"/><use href="#h" x="937.37" y="347.54"/><use href="#v1" x="918.27" y="336.54"/><use href="#v2" x="930.97" y="336.54"/><use href="#v2" x="918.27" y="358.54"/><use href="#v1" x="930.97" y="358.54"/><use href="#h" x="976.40" y="347.54"/><use href="#v1" x="982.80" y="336.54"/><use href="#v2" x="982.80" y="358.54"/><use href="#h" x="685.95" y="366.58"/><use href="#h" x="711.45" y="366.58"/><use href="#v1" x="692.35" y="355.58"/><use href="#v2" x="705.05" y="355.58"/><use href="#v2" x="692.35" y="377.58"/><use href="#v1" x="705.05" y="377.58"/><use href="#h" x="750.48" y="366.58"/><use href="#h" x="775.98" y="366.58"/><use href="#v1" x="756.88" y="355.58"/><use href="#v2" x="769.58" y="355.58"/><use href="#v2" x="756.88" y="377.58"/><use href="#v1" x="769.58" y="377.58"/><use href="#h" x="815.01" y="366.58"/><use href="#h" x="840.51" y="366.58"/><use href="#v1" x="821.41" y="355.58"/><use href="#v2" x="834.11" y="355.58"/><use href="#v2" x="821.41" y="377.58"/><use href="#v1" x="834.11" y="377.58"/><use href="#h" x="879.54" y="366.58"/><use href="#h" x="905.04" y="366.58"/><use href="#v1" x="885.94" y="355.58"/><use href="#v2" x="898.64" y="355.58"/><use href="#v2" x="885.94" y="377.58"/><use href="#v1" x="898.64" y="377.58"/><use href="#h" x="944.07" y="366.58"/><use href="#h" x="969.57" y="366.58"/><use href="#v1" x="950.47" y="355.58"/><use href="#v2" x="963.17" y="355.58"/><use href="#v2" x="950.47" y="377.58"/><use href="#v1" x="963.17" y="377.58"/><use href="#h" x="679.25" y="385.62"/><use href="#v2" x="672.85" y="374.62"/><use href="#v1" x="672.85" y="396.62"/><use href="#h" x="718.28" y="385.62"/><use href="#h" x="743.78" y="385.62"/><use href="#v1" x="724.68" y="374.62"/><use href="#v2" x="737.38" y="374.62"/><use href="#v2" x="724.68" y="396.62"/><use href="#v1" x="737.38" y="396.62"/><use href="#h" x="782.81" y="385.62"/><use href="#h" x="808.31" y="385.62"/><use href="#v1" x="789.21" y="374.62"/><use href="#v2" x="801.91" y="374.62"/><use href="#v2" x="789.21" y="396.62"/><use href="#v1" x="801.91" y="396.62"/><use href="#h" x="847.34" y="385.62"/><use href="#h" x="872.84" y="385.62"/><use href="#v1" x="853.74" y="374.62"/><use href="#v2" x="866.44" y="374.62"/><use href="#v2" x="853.74" y="396.62"/><use href="#v1" x="866.44" y="396.62"/><use href="#h" x="911.87" y="385.62"/><use href="#h" x="937.37" y="385.62"/><use href="#v1" x="918.27" y="374.62"/><use href="#v2" x="930.97" y="374.62"/><use href="#v2" x="918.27" y="396.62"/><use href="#v1" x="930.97" y="396.62"/><use href="#h" x="976.40" y="385.62"/><use href="#v1" x="982.80" y="374.62"/><use href="#v2" x="982.80" y="396.62"/><use href="#h" x="685.95" y="404.66"/><use href="#h" x="711.45" y="404.66"/><use href="#v1" x="692.35" y="393.66"/><use href="#v2" x="705.05" y="393.66"/><use href="#v2" x="692.35" y="415.66"/><use href="#v1" x="705.05" y="415.66"/><use href="#h" x="750.48" y="404.66"/><use href="#h" x="775.98" y="404.66"/><use href="#v1" x="756.88" y="393.66"/><use href="#v2" x="769.58" y="393.66"/><use href="#v2" x="756.88" y="415.66"/><use href="#v1" x="769.58" y="415.66"/><use href="#h" x="815.01" y="404.66"/><use href="#h" x="840.51" y="404.66"/><use href="#v1" x="821.41" y="393.66"/><use href="#v2" x="834.11" y="393.66"/><use href="#v2" x="821.41" y="415.66"/><use href="#v1" x="834.11" y="415.66"/><use href="#h" x="879.54" y="404.66"/><use href="#h" x="905.04" y="404.66"/><use href="#v1" x="885.94" y="393.66"/><use href="#v2" x="898.64" y="393.66"/><use href="#v2" x="885.94" y="415.66"/><use href="#v1" x="898.64" y="415.66"/><use href="#h" x="944.07" y="404.66"/><use href="#h" x="969.57" y="404.66"/><use href="#v1" x="950.47" y="393.66"/><use href="#v2" x="963.17" y="393.66"/><use href="#v2" x="950.47" y="415.66"/><use href="#v1" x="963.17" y="415.66"/><use href="#h" x="679.25" y="423.70"/><use href="#v2" x="672.85" y="412.70"/><use href="#v1" x="672.85" y="434.70"/><use href="#h" x="718.28" y="423.70"/><use href="#h" x="743.78" y="423.70"/><use href="#v1" x="724.68" y="412.70"/><use href="#v2" x="737.38" y="412.70"/><use href="#v2" x="724.68" y="434.70"/><use href="#v1" x="737.38" y="434.70"/><use href="#h" x="782.81" y="423.70"/><use href="#h" x="808.31" y="423.70"/><use href="#v1" x="789.21" y="412.70"/><use href="#v2" x="801.91" y="412.70"/><use href="#v2" x="789.21" y="434.70"/><use href="#v1" x="801.91" y="434.70"/><use href="#h" x="847.34" y="423.70"/><use href="#h" x="872.84" y="423.70"/><use href="#v1" x="853.74" y="412.70"/><use href="#v2" x="866.44" y="412.70"/><use href="#v2" x="853.74" y="434.70"/><use href="#v1" x="866.44" y="434.70"/><use href="#h" x="911.87" y="423.70"/><use href="#h" x="937.37" y="423.70"/><use href="#v1" x="918.27" y="412.70"/><use href="#v2" x="930.97" y="412.70"/><use href="#v2" x="918.27" y="434.70"/><use href="#v1" x="930.97" y="434.70"/><use href="#h" x="976.40" y="423.70"/><use href="#v1" x="982.80" y="412.70"/><use href="#v2" x="982.80" y="434.70"/><use href="#h" x="685.95" y="442.74"/><use href="#h" x="711.45" y="442.74"/><use href="#v1" x="692.35" y="431.74"/><use href="#v2" x="705.05" y="431.74"/><use href="#v2" x="692.35" y="453.74"/><use href="#v1" x="705.05" y="453.74"/><use href="#h" x="750.48" y="442.74"/><use href="#h" x="775.98" y="442.74"/><use href="#v1" x="756.88" y="431.74"/><use href="#v2" x="769.58" y="431.74"/><use href="#v2" x="756.88" y="453.74"/><use href="#v1" x="769.58" y="453.74"/><use href="#h" x="815.01" y="442.74"/><use href="#h" x="840.51" y="442.74"/><use href="#v1" x="821.41" y="431.74"/><use href="#v2" x="834.11" y="431.74"/><use href="#v2" x="821.41" y="453.74"/><use href="#v1" x="834.11" y="453.74"/><use href="#h" x="879.54" y="442.74"/><use href="#h" x="905.04" y="442.74"/><use href="#v1" x="885.94" y="431.74"/><use href="#v2" x="898.64" y="431.74"/><use href="#v2" x="885.94" y="453.74"/><use href="#v1" x="898.64" y="453.74"/><use href="#h" x="944.07" y="442.74"/><use href="#h" x="969.57" y="442.74"/><use href="#v1" x="950.47" y="431.74"/><use href="#v2" x="963.17" y="431.74"/><use href="#v2" x="950.47" y="453.74"/><use href="#v1" x="963.17" y="453.74"/><use href="#h" x="679.25" y="461.78"/><use href="#v2" x="672.85" y="450.78"/><use href="#v1" x="672.85" y="472.78"/><use href="#h" x="718.28" y="461.78"/><use href="#h" x="743.78" y="461.78"/><use href="#v1" x="724.68" y="450.78"/><use href="#v2" x="737.38" y="450.78"/><use href="#v2" x="724.68" y="472.78"/><use href="#v1" x="737.38" y="472.78"/><use href="#h" x="782.81" y="461.78"/><use href="#h" x="808.31" y="461.78"/><use href="#v1" x="789.21" y="450.78"/><use href="#v2" x="801.91" y="450.78"/><use href="#v2" x="789.21" y="472.78"/><use href="#v1" x="801.91" y="472.78"/><use href="#h" x="847.34" y="461.78"/><use href="#h" x="872.84" y="461.78"/><use href="#v1" x="853.74" y="450.78"/><use href="#v2" x="866.44" y="450.78"/><use href="#v2" x="853.74" y="472.78"/><use href="#v1" x="866.44" y="472.78"/><use href="#h" x="911.87" y="461.78"/><use href="#h" x="937.37" y="461.78"/><use href="#v1" x="918.27" y="450.78"/><use href="#v2" x="930.97" y="450.78"/><use href="#v2" x="918.27" y="472.78"/><use href="#v1" x="930.97" y="472.78"/><use href="#h" x="976.40" y="461.78"/><use href="#v1" x="982.80" y="450.78"/><use href="#v2" x="982.80" y="472.78"/><use href="#h" x="685.95" y="480.82"/><use href="#h" x="711.45" y="480.82"/><use href="#v1" x="692.35" y="469.82"/><use href="#v2" x="705.05" y="469.82"/><use href="#v2" x="692.35" y="491.82"/><use href="#v1" x="705.05" y="491.82"/><use href="#h" x="750.48" y="480.82"/><use href="#h" x="775.98" y="480.82"/><use href="#v1" x="756.88" y="469.82"/><use href="#v2" x="769.58" y="469.82"/><use href="#v2" x="756.88" y="491.82"/><use href="#v1" x="769.58" y="491.82"/><use href="#h" x="815.01" y="480.82"/><use href="#h" x="840.51" y="480.82"/><use href="#v1" x="821.41" y="469.82"/><use href="#v2" x="834.11" y="469.82"/><use href="#v2" x="821.41" y="491.82"/><use href="#v1" x="834.11" y="491.82"/><use href="#h" x="879.54" y="480.82"/><use href="#h" x="905.04" y="480.82"/><use href="#v1" x="885.94" y="469.82"/><use href="#v2" x="898.64" y="469.82"/><use href="#v2" x="885.94" y="491.82"/><use href="#v1" x="898.64" y="491.82"/><use href="#h" x="944.07" y="480.82"/><use href="#h" x="969.57" y="480.82"/><use href="#v1" x="950.47" y="469.82"/><use href="#v2" x="963.17" y="469.82"/><use href="#v2" x="950.47" y="491.82"/><use href="#v1" x="963.17" y="491.82"/><use href="#h" x="679.25" y="499.86"/><use href="#v2" x="672.85" y="488.86"/><use href="#v1" x="672.85" y="510.86"/><use href="#h" x="718.28" y="499.86"/><use href="#h" x="743.78" y="499.86"/><use href="#v1" x="724.68" y="488.86"/><use href="#v2" x="737.38" y="488.86"/><use href="#v2" x="724.68" y="510.86"/><use href="#v1" x="737.38" y="510.86"/><use href="#h" x="782.81" y="499.86"/><use href="#h" x="808.31" y="499.86"/><use href="#v1" x="789.21" y="488.86"/><use href="#v2" x="801.91" y="488.86"/><use href="#v2" x="789.21" y="510.86"/><use href="#v1" x="801.91" y="510.86"/><use href="#h" x="847.34" y="499.86"/><use href="#h" x="872.84" y="499.86"/><use href="#v1" x="853.74" y="488.86"/><use href="#v2" x="866.44" y="488.86"/><use href="#v2" x="853.74" y="510.86"/><use href="#v1" x="866.44" y="510.86"/><use href="#h" x="911.87" y="499.86"/><use href="#h" x="937.37" y="499.86"/><use href="#v1" x="918.27" y="488.86"/><use href="#v2" x="930.97" y="488.86"/><use href="#v2" x="918.27" y="510.86"/><use href="#v1" x="930.97" y="510.86"/><use href="#h" x="976.40" y="499.86"/><use href="#v1" x="982.80" y="488.86"/><use href="#v2" x="982.80" y="510.86"/><use href="#h" x="685.95" y="518.90"/><use href="#h" x="711.45" y="518.90"/><use href="#v1" x="692.35" y="507.90"/><use href="#v2" x="705.05" y="507.90"/><use href="#v2" x="692.35" y="529.90"/><use href="#v1" x="705.05" y="529.90"/><use href="#h" x="750.48" y="518.90"/><use href="#h" x="775.98" y="518.90"/><use href="#v1" x="756.88" y="507.90"/><use href="#v2" x="769.58" y="507.90"/><use href="#v2" x="756.88" y="529.90"/><use href="#v1" x="769.58" y="529.90"/><use href="#h" x="815.01" y="518.90"/><use href="#h" x="840.51" y="518.90"/><use href="#v1" x="821.41" y="507.90"/><use href="#v2" x="834.11" y="507.90"/><use href="#v2" x="821.41" y="529.90"/><use href="#v1" x="834.11" y="529.90"/><use href="#h" x="879.54" y="518.90"/><use href="#h" x="905.04" y="518.90"/><use href="#v1" x="885.94" y="507.90"/><use href="#v2" x="898.64" y="507.90"/><use href="#v2" x="885.94" y="529.90"/><use href="#v1" x="898.64" y="529.90"/><use href="#h" x="944.07" y="518.90"/><use href="#h" x="969.57" y="518.90"/><use href="#v1" x="950.47" y="507.90"/><use href="#v2" x="963.17" y="507.90"/><use href="#v2" x="950.47" y="529.90"/><use href="#v1" x="963.17" y="529.90"/><use href="#h" x="679.25" y="537.94"/><use href="#v2" x="672.85" y="526.94"/><use href="#v1" x="672.85" y="548.94"/><use href="#h" x="718.28" y="537.94"/><use href="#h" x="743.78" y="537.94"/><use href="#v1" x="724.68" y="526.94"/><use href="#v2" x="737.38" y="526.94"/><use href="#v2" x="724.68" y="548.94"/><use href="#v1" x="737.38" y="548.94"/><use href="#h" x="782.81" y="537.94"/><use href="#h" x="808.31" y="537.94"/><use href="#v1" x="789.21" y="526.94"/><use href="#v2" x="801.91" y="526.94"/><use href="#v2" x="789.21" y="548.94"/><use href="#v1" x="801.91" y="548.94"/><use href="#h" x="847.34" y="537.94"/><use href="#h" x="872.84" y="537.94"/><use href="#v1" x="853.74" y="526.94"/><use href="#v2" x="866.44" y="526.94"/><use href="#v2" x="853.74" y="548.94"/><use href="#v1" x="866.44" y="548.94"/><use href="#h" x="911.87" y="537.94"/><use href="#h" x="937.37" y="537.94"/><use href="#v1" x="918.27" y="526.94"/><use href="#v2" x="930.97" y="526.94"/><use href="#v2" x="918.27" y="548.94"/><use href="#v1" x="930.97" y="548.94"/><use href="#h" x="976.40" y="537.94"/><use href="#v1" x="982.80" y="526.94"/><use href="#v2" x="982.80" y="548.94"/><use href="#h" x="685.95" y="556.98"/><use href="#h" x="711.45" y="556.98"/><use href="#v1" x="692.35" y="545.98"/><use href="#v2" x="705.05" y="545.98"/><use href="#h" x="750.48" y="556.98"/><use href="#h" x="775.98" y="556.98"/><use href="#v1" x="756.88" y="545.98"/><use href="#v2" x="769.58" y="545.98"/><use href="#h" x="815.01" y="556.98"/><use href="#h" x="840.51" y="556.98"/><use href="#v1" x="821.41" y="545.98"/><use href="#v2" x="834.11" y="545.98"/><use href="#h" x="879.54" y="556.98"/><use href="#h" x="905.04" y="556.98"/><use href="#v1" x="885.94" y="545.98"/><use href="#v2" x="898.64" y="545.98"/><use href="#h" x="944.07" y="556.98"/><use href="#h" x="969.57" y="556.98"/><use href="#v1" x="950.47" y="545.98"/><use href="#v2" x="963.17" y="545.98"/></g></svg>
<div style="position:absolute;left:0px;top:668px;width:1366px;height:1px;background:#151515"></div></body></html>
